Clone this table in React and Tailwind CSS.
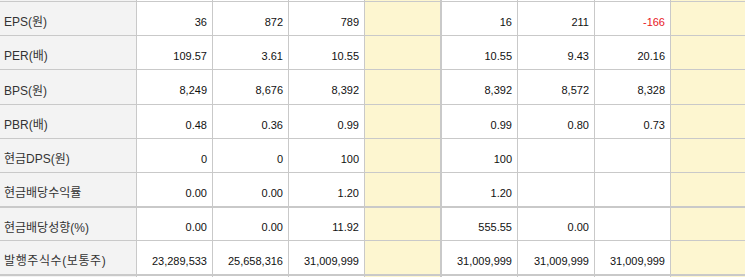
import React from "react";

const rows = [
  { label: "EPS(원)", h: "h-[34px]", vals: ["36", "872", "789", "16", "211", "-166"] },
  { label: "PER(배)", h: "h-[34px]", vals: ["109.57", "3.61", "10.55", "10.55", "9.43", "20.16"] },
  { label: "BPS(원)", h: "h-[35px]", vals: ["8,249", "8,676", "8,392", "8,392", "8,572", "8,328"] },
  { label: "PBR(배)", h: "h-[34px]", vals: ["0.48", "0.36", "0.99", "0.99", "0.80", "0.73"] },
  { label: "현금DPS(원)", h: "h-[34px]", vals: ["0", "0", "100", "100", "", ""] },
  { label: "현금배당수익률", h: "h-[35px]", thick: true, vals: ["0.00", "0.00", "1.20", "1.20", "", ""] },
  { label: "현금배당성향(%)", h: "h-[33px]", vals: ["0.00", "0.00", "11.92", "555.55", "0.00", ""] },
  { label: "발행주식수(보통주)", h: "h-[35px]", thick: true, wide: true, vals: ["23,289,533", "25,658,316", "31,009,999", "31,009,999", "31,009,999", "31,009,999"] },
];

function Num({ v, w }) {
  const neg = v.startsWith("-");
  return (
    <div
      className={`${w} h-full shrink-0 border-r border-[#c9c9c9] flex items-center justify-end pr-[5px] pt-[7px] ${
        neg ? "text-[#e8141e]" : "text-[#111]"
      }`}
    >
      {v}
    </div>
  );
}

function Row({ row }) {
  const v = row.vals;
  return (
    <div
      className={`flex ${row.h} border-[#c9c9c9] ${row.thick ? "border-b-2" : "border-b"}`}
    >
      <div
        className={`w-[137px] shrink-0 h-full bg-[#f3f3f3] border-r border-[#c9c9c9] flex items-center pl-[4px] pt-[7px] text-[12px] text-[#333] ${
          row.wide ? "tracking-[0.6px]" : ""
        }`}
        style={{ fontFamily: '"Liberation Sans", "Noto Sans CJK KR", sans-serif' }}
      >
        {row.label}
      </div>
      <Num v={v[0]} w="w-[76px]" />
      <Num v={v[1]} w="w-[76px]" />
      <Num v={v[2]} w="w-[76px]" />
      <div className="w-[77px] shrink-0 h-full bg-[#fdf6d0] border-r-2 border-[#c9c9c9]" />
      <Num v={v[3]} w="w-[76px]" />
      <Num v={v[4]} w="w-[77px]" />
      <Num v={v[5]} w="w-[76px]" />
      <div className="flex-1 h-full bg-[#fdf6d0]" />
    </div>
  );
}

function Sliver({ h, border }) {
  return (
    <div className={`flex ${h} ${border ? "border-b border-[#c9c9c9]" : ""}`}>
      <div className="w-[137px] shrink-0 bg-[#f3f3f3] border-r border-[#c9c9c9]" />
      <div className="w-[76px] shrink-0 border-r border-[#c9c9c9]" />
      <div className="w-[76px] shrink-0 border-r border-[#c9c9c9]" />
      <div className="w-[76px] shrink-0 border-r border-[#c9c9c9]" />
      <div className="w-[77px] shrink-0 bg-[#fdf6d0] border-r-2 border-[#c9c9c9]" />
      <div className="w-[76px] shrink-0 border-r border-[#c9c9c9]" />
      <div className="w-[77px] shrink-0 border-r border-[#c9c9c9]" />
      <div className="w-[76px] shrink-0 border-r border-[#c9c9c9]" />
      <div className="flex-1 bg-[#fdf6d0]" />
    </div>
  );
}

export default function App() {
  return (
    <div
      className="w-[745px] h-[277px] overflow-hidden bg-white text-[11px]"
      style={{ fontFamily: '"Liberation Sans", Tahoma, sans-serif' }}
    >
      <Sliver h="h-[2px]" border />
      {rows.map((r) => (
        <Row key={r.label} row={r} />
      ))}
      <Sliver h="h-[1px]" />
    </div>
  );
}
